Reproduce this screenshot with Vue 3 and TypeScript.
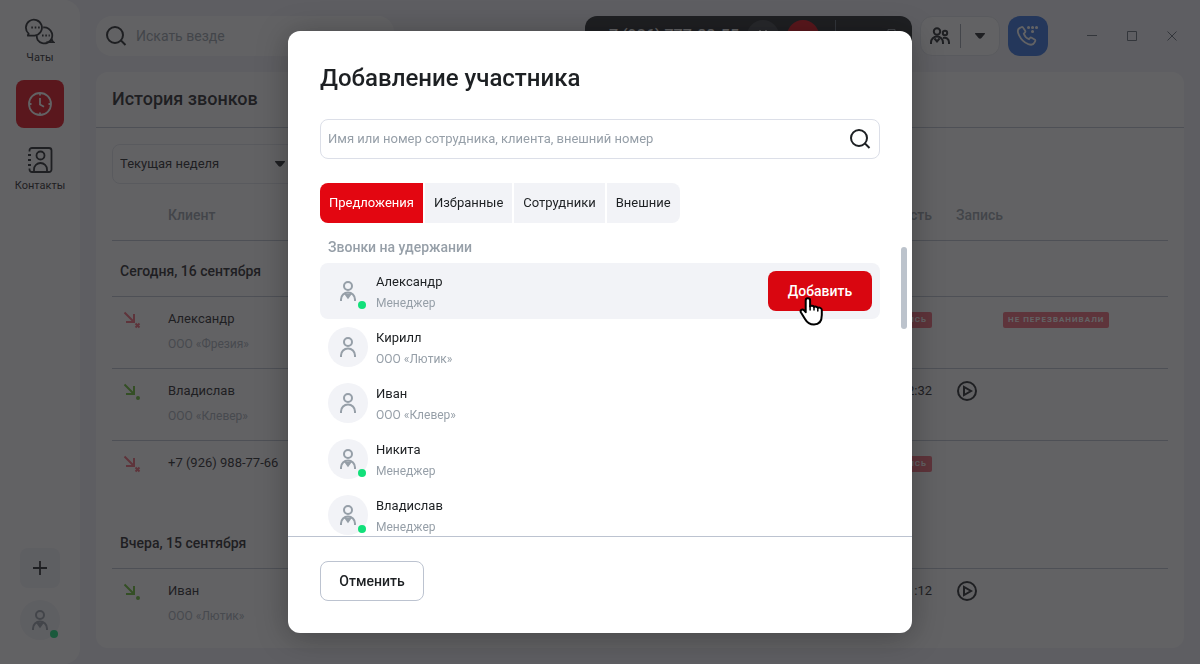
<script setup lang="ts">
import { ref } from 'vue'

interface Person {
  name: string
  note: string
  online: boolean
  active?: boolean
}

interface Call {
  client: string
  company: string
  missed: boolean
  duration: string
  badge: string
  status: string
}

interface CallGroup {
  title: string
  calls: Call[]
}

const tabs = ['Предложения', 'Избранные', 'Сотрудники', 'Внешние']
const activeTab = ref('Предложения')

const people: Person[] = [
  { name: 'Александр', note: 'Менеджер', online: true, active: true },
  { name: 'Кирилл', note: 'ООО «Лютик»', online: false },
  { name: 'Иван', note: 'ООО «Клевер»', online: false },
  { name: 'Никита', note: 'Менеджер', online: true },
  { name: 'Владислав', note: 'Менеджер', online: true },
]

const groups: CallGroup[] = [
  {
    title: 'Сегодня, 16 сентября',
    calls: [
      { client: 'Александр', company: 'ООО «Фрезия»', missed: true, duration: '', badge: 'Не дозвонились', status: 'Не перезванивали' },
      { client: 'Владислав', company: 'ООО «Клевер»', missed: false, duration: '02:32', badge: '', status: '' },
      { client: '+7 (926) 988-77-66', company: '', missed: true, duration: '', badge: 'Не дозвонились', status: '' },
    ],
  },
  {
    title: 'Вчера, 15 сентября',
    calls: [{ client: 'Иван', company: 'ООО «Лютик»', missed: false, duration: '01:12', badge: '', status: '' }],
  },
]
</script>

<template>
  <div class="app">
    <nav class="sidebar">
      <button class="nav-item" type="button">
        <svg width="30" height="28" viewBox="0 0 30 28" class="line">
          <path d="M3.600 15.600A8 8 0 1 1 9.500 17.600H2.200c1.300-.5 1.500-1.200 1.400-2z" />
          <path d="M18.200 9.500a8 8 0 1 1-5.500 12.500 8 8 0 0 1-.9-4.500M26.800 20.500c-.1 1.500.3 2.600 1.600 3.700h-7" />
          <path d="M6.300 9.500h1.600M9.700 9.500h1.600M13.100 9.500h1.600M17 17.500h1.600M20.300 17.500h1.600M23.600 17.500h1.200" />
        </svg>
        <span>Чаты</span>
      </button>
      <button class="nav-item current" type="button" aria-label="История звонков">
        <svg width="24" height="24" viewBox="0 0 24 24" class="line">
          <circle cx="12" cy="12" r="11" />
          <path d="M12 6v6.400l4 2.400M12 1v2.500M12 20.500V23M1 12h2.500M20.500 12H23" />
        </svg>
      </button>
      <button class="nav-item" type="button">
        <svg width="26" height="28" viewBox="0 0 26 28" class="line">
          <path d="M2.500 5.500V4.500a2.500 2.500 0 0 1 2.500-2.500h17a2.500 2.500 0 0 1 2.500 2.500v19a2.500 2.500 0 0 1-2.500 2.500H5a2.500 2.500 0 0 1-2.500-2.500v-1" />
          <path d="M1 9h3M1 14h3M1 19h3" />
          <circle cx="13.500" cy="9.500" r="4" />
          <path d="M7 26v-2.500a6.500 6.500 0 0 1 13 0V26" />
        </svg>
        <span>Контакты</span>
      </button>
      <div class="spacer"></div>
      <button class="add" type="button" aria-label="Добавить">
        <svg width="16" height="16" viewBox="0 0 16 16" class="line"><path d="M8 1v14M1 8h14" /></svg>
      </button>
      <div class="avatar">
        <svg width="24" height="24" viewBox="0 0 24 24" class="line thick">
          <circle cx="12" cy="7" r="4" />
          <path d="M5 22v-1.500a7 7 0 0 1 14 0V22M9 14.500l3 4 3-4M10.500 15l1.500 1.500 1.500-1.500" />
        </svg>
        <i class="dot"></i>
      </div>
    </nav>

    <main class="main">
      <header class="topbar">
        <label class="search">
          <svg width="24" height="24" viewBox="0 0 24 24" class="line thick"><circle cx="11" cy="11" r="8" /><path d="M17 16.500l4.500 4.500" /></svg>
          <input type="text" placeholder="Искать везде" aria-label="Искать везде" />
        </label>
        <div class="callbar">
          <span class="number">7 (926) 777-88-55</span>
          <button class="round" type="button" aria-label="Удержать">
            <svg width="12" height="14" viewBox="0 0 12 14" class="line"><path d="M3 1v12M9 1v12" /></svg>
          </button>
          <button class="round hang" type="button" aria-label="Завершить"></button>
          <span class="rule"></span>
          <svg width="48" height="24" viewBox="0 0 48 24" class="line thin"><path d="M11.500 8v8M36 5.500h7v12h-7z" /></svg>
        </div>
        <div class="group">
          <button type="button" aria-label="Участники">
            <svg width="24" height="24" viewBox="0 0 24 24" class="line thick">
              <circle cx="9" cy="7.500" r="3.200" />
              <circle cx="17" cy="9" r="2.200" />
              <path d="M3 20v-1.500a6 6 0 0 1 12 0V20M6.500 14.500l2.500 3 2.500-3M15 14c3.500-.8 6 1 6 4.500V20" />
            </svg>
          </button>
          <button type="button" aria-label="Ещё">
            <svg width="12" height="8" viewBox="0 0 12 8"><path d="M1.500 1h9q1 0 .3.900L7.500 6q-1.500 1.500-3 0L1.200 1.900Q.5 1 1.500 1z" fill="currentColor" /></svg>
          </button>
        </div>
        <button class="dial" type="button" aria-label="Набрать номер">
          <svg width="24" height="24" viewBox="0 0 24 24" class="line">
            <path d="M5.300 3.200l-1.800.9c-2 1.100-2 4-.5 7.100 2 4.200 5.500 7.600 9.300 9 3 1 5.200.4 6.100-1.500l.8-1.600c.3-.7 0-1.300-.6-1.700l-3-1.700c-.6-.3-1.200-.2-1.600.3l-1 1.200c-2-.8-4.500-3.500-5.200-5.500l1.200-1.300c.4-.4.5-.9.300-1.400L7.300 3.900c-.4-.9-1.200-1.100-2-.7z" />
            <path d="M12.500 3.500h.1M16.500 3.500h.1M20.500 3.500h.1M16.500 7.500h.1" class="dots" />
          </svg>
        </button>
        <div class="window-controls">
          <button type="button" aria-label="Свернуть"><svg width="12" height="12" viewBox="0 0 12 12" class="line thin"><path d="M1 5.500h10" /></svg></button>
          <button type="button" aria-label="Развернуть"><svg width="12" height="12" viewBox="0 0 12 12" class="line thin"><path d="M1.500 1.500h9v9h-9z" /></svg></button>
          <button type="button" aria-label="Закрыть"><svg width="12" height="12" viewBox="0 0 12 12" class="line thin"><path d="M1.500 1.500l9 9M10.500 1.500l-9 9" /></svg></button>
        </div>
      </header>

      <section class="panel">
        <h1>История звонков</h1>
        <div class="content">
          <div class="period">
            <select aria-label="Период"><option>Текущая неделя</option></select>
            <svg width="12" height="8" viewBox="0 0 12 8"><path d="M1.500 1h9q1 0 .3.900L7.500 6q-1.500 1.500-3 0L1.200 1.900Q.5 1 1.500 1z" fill="currentColor" /></svg>
          </div>
          <table>
            <colgroup><col class="c-icon" /><col /><col class="c-duration" /><col class="c-record" /><col class="c-status" /></colgroup>
            <thead>
              <tr><th></th><th>Клиент</th><th class="right">Длительность</th><th>Запись</th><th></th></tr>
            </thead>
            <tbody v-for="group in groups" :key="group.title">
              <tr class="day"><th colspan="5">{{ group.title }}</th></tr>
              <tr v-for="call in group.calls" :key="call.client" class="call">
                <td>
                  <svg width="24" height="24" viewBox="0 0 24 24" class="line thick" :class="call.missed ? 'missed' : 'accepted'">
                    <path d="M4.500 5.500l9.500 9.500M14 7v8H6" />
                    <path v-if="call.missed" d="M15.500 16.500l4 4M19.500 16.500l-4 4" />
                    <circle v-else cx="18" cy="19" r="1" />
                  </svg>
                </td>
                <td><div class="client">{{ call.client }}</div><div class="company">{{ call.company }}</div></td>
                <td class="right"><span v-if="call.badge" class="badge">{{ call.badge }}</span><template v-else>{{ call.duration }}</template></td>
                <td>
                  <button v-if="call.duration" class="play" type="button" aria-label="Слушать">
                    <svg width="22" height="22" viewBox="0 0 22 22" class="line thick"><circle cx="11" cy="11" r="9" /><path d="M8 7v8l7-4z" /></svg>
                  </button>
                </td>
                <td><span v-if="call.status" class="badge">{{ call.status }}</span></td>
              </tr>
            </tbody>
          </table>
        </div>
      </section>
    </main>

    <div class="overlay">
      <div class="modal" role="dialog" aria-modal="true" aria-labelledby="dialog-title">
        <div class="modal-top">
          <h2 id="dialog-title">Добавление участника</h2>
          <label class="field">
            <input type="text" placeholder="Имя или номер сотрудника, клиента, внешний номер" aria-label="Поиск участника" />
            <svg width="24" height="24" viewBox="0 0 24 24" class="line thick"><circle cx="11" cy="11" r="8" /><path d="M17 16.500l4.500 4.500" /></svg>
          </label>
          <div class="tabs" role="tablist">
            <button v-for="tab in tabs" :key="tab" type="button" role="tab" :aria-selected="tab === activeTab" :class="{ selected: tab === activeTab }" @click="activeTab = tab">{{ tab }}</button>
          </div>
        </div>
        <div class="list">
          <h3>Звонки на удержании</h3>
          <ul>
            <li v-for="person in people" :key="person.name" :class="{ active: person.active }">
              <div class="avatar">
                <svg width="24" height="24" viewBox="0 0 24 24" class="line thick">
                  <circle cx="12" cy="7" r="4" />
                  <path d="M5 22v-1.500a7 7 0 0 1 14 0V22" />
                  <path v-if="person.online" d="M9 14.500l3 4 3-4M10.500 15l1.500 1.500 1.500-1.500" />
                </svg>
                <i v-if="person.online" class="dot"></i>
              </div>
              <div class="who"><div class="name">{{ person.name }}</div><div class="note">{{ person.note }}</div></div>
              <button v-if="person.active" class="primary" type="button">
                Добавить
                <svg class="pointer" width="26" height="30" viewBox="0 0 26 30">
                  <path d="M6.700 3.500a2.200 2.200 0 0 1 4.400 0V9.500c.8-1 3.500-.9 3.900.6 1-.9 3.400-.6 3.800.9 1.100-.8 4-.3 4 2V18c0 5.500-2.500 9.500-7.800 9.500-5 0-7-2-9-5.500l-4-6.500c-1.300-2.300 1.300-4 2.900-2.300l1.800 2z" fill="#fff" stroke="#000" stroke-width="2" stroke-linejoin="round" />
                  <path d="M11.100 9v4M15 10v3M18.800 11v3" fill="none" stroke="#000" stroke-width="1.500" stroke-linecap="round" />
                </svg>
              </button>
            </li>
          </ul>
          <div class="thumb"></div>
        </div>
        <footer><button class="secondary" type="button">Отменить</button></footer>
      </div>
    </div>
  </div>
</template>

<style>
body {
  margin: 0;
  overflow: hidden;
}
</style>

<style scoped>
* {
  box-sizing: border-box;
}
.app {
  display: flex;
  height: 100vh;
  background: #f2f2f7;
  color: #1d2023;
  font: 13px/20px Roboto, 'Noto Sans', sans-serif;
}
button,
input,
select {
  margin: 0;
  padding: 0;
  border: 0;
  background: none;
  color: inherit;
  font: inherit;
}
input,
select {
  outline: 0;
  appearance: none;
}
input::placeholder {
  color: #969fa8;
  opacity: 1;
}
button {
  display: flex;
  align-items: center;
  justify-content: center;
}
svg {
  display: block;
  flex: none;
}
.line {
  fill: none;
  stroke: currentColor;
  stroke-width: 1.8;
}
.thick {
  stroke-width: 2;
}
.thin {
  stroke-width: 1;
}
.dots {
  stroke-width: 3;
  stroke-linecap: round;
}
.sidebar {
  display: flex;
  flex-direction: column;
  align-items: center;
  gap: 16px;
  width: 80px;
  flex: none;
  padding: 16px 0 24px;
  background: #fff;
  border-radius: 0 16px 16px 0;
}
.nav-item {
  flex-direction: column;
  width: 64px;
  height: 48px;
  padding-top: 4px;
  gap: 4px;
  font-size: 11px;
  line-height: 16px;
}
.nav-item.current {
  width: 48px;
  padding-top: 0;
  border-radius: 8px;
  background: #e30611;
  color: #fff;
}
.spacer {
  flex: 1;
}
.add {
  width: 40px;
  height: 40px;
  margin-bottom: -4px;
  border-radius: 8px;
  background: #f2f3f7;
}
.avatar {
  display: flex;
  align-items: center;
  justify-content: center;
  position: relative;
  flex: none;
  width: 40px;
  height: 40px;
  border-radius: 50%;
  background: #f2f3f7;
  color: #969fa8;
}
.dot {
  position: absolute;
  right: 2px;
  bottom: 2px;
  width: 8px;
  height: 8px;
  border-radius: 50%;
  background: #12e07a;
}
.main {
  display: flex;
  flex-direction: column;
  flex: 1;
  min-width: 0;
  gap: 16px;
  padding: 16px;
}
.topbar {
  display: flex;
  align-items: center;
  height: 40px;
  gap: 8px;
}
.search {
  display: flex;
  align-items: center;
  width: 298px;
  height: 40px;
  padding: 0 8px;
  gap: 8px;
  border-radius: 16px;
  background: #fff;
}
.search input {
  flex: 1;
  min-width: 0;
  font-size: 14px;
}
.callbar {
  display: flex;
  align-items: center;
  height: 40px;
  width: 327px;
  margin-left: auto;
  padding: 0 12px 0 24px;
  gap: 8px;
  border-radius: 12px;
  background: #1d2023;
  color: #fff;
}
.number {
  flex: 1;
  font-size: 16px;
  font-weight: 500;
  white-space: nowrap;
}
.round {
  width: 32px;
  height: 32px;
  border-radius: 50%;
  background: #3a3e42;
}
.round.hang {
  background: #e30611;
}
.rule {
  width: 1px;
  height: 32px;
  margin: 0 8px;
  background: #626c77;
}
.callbar .thin {
  color: #969fa8;
}
.group {
  display: flex;
  align-items: center;
  width: 80px;
  height: 40px;
  border: 1px solid #e2e5eb;
  border-radius: 12px;
  background: #fff;
}
.group button {
  flex: 1;
  height: 24px;
}
.group button + button {
  border-left: 1px solid #969fa8;
}
.dial {
  width: 40px;
  height: 40px;
  border-radius: 12px;
  background: #2f6fe0;
  color: #fff;
}
.window-controls {
  display: flex;
  gap: 28px;
  padding: 0 6px 0 30px;
  color: #626c77;
}
.panel {
  display: flex;
  flex-direction: column;
  flex: 1;
  min-height: 0;
  overflow: hidden;
  border-radius: 12px;
  background: #fff;
}
h1 {
  flex: none;
  height: 56px;
  margin: 0;
  padding: 0 16px;
  border-bottom: 1px solid #bcc3d0;
  font-size: 18px;
  line-height: 54px;
  font-weight: 500;
}
.content {
  padding: 16px 16px 0;
}
.period {
  display: flex;
  align-items: center;
  width: 184px;
  height: 40px;
  padding: 0 9px 0 7px;
  border: 1px solid #e2e5eb;
  border-radius: 8px;
}
.period select {
  flex: 1;
}
table {
  width: 100%;
  table-layout: fixed;
  border-spacing: 0;
}
.c-icon {
  width: 48px;
}
.c-duration {
  width: 200px;
}
.c-record {
  width: 47px;
}
.c-status {
  width: 173px;
}
th {
  padding: 0 8px;
  border-bottom: 1px solid #bcc3d0;
  text-align: left;
  font-size: 14px;
  font-weight: 500;
  white-space: nowrap;
}
thead th {
  height: 57px;
  padding-top: 6px;
  color: #969fa8;
}
.day th {
  height: 56px;
  padding-top: 4px;
}
.call td {
  height: 72px;
  padding: 10px 8px 0;
  border-bottom: 1px solid #bcc3d0;
  vertical-align: top;
  line-height: 24px;
}
.call:last-child td {
  border-bottom-color: transparent;
}
.right,
.call td.right {
  padding-right: 16px;
  text-align: right;
}
.company {
  color: #a6aeb8;
  font-size: 12px;
  line-height: 26px;
}
.missed {
  color: #f26575;
}
.accepted {
  color: #64bf2c;
}
.badge {
  display: inline-block;
  padding: 0 5px;
  border-radius: 2px;
  background: #f26575;
  color: #fff;
  font-size: 8px;
  line-height: 16px;
  font-weight: 700;
  letter-spacing: 1px;
  text-transform: uppercase;
  white-space: nowrap;
  vertical-align: middle;
}
.play {
  height: 24px;
}
.overlay {
  position: fixed;
  inset: 0;
  display: flex;
  align-items: center;
  justify-content: center;
  padding: 31px 16px;
  background: rgba(31, 32, 34, 0.7);
}
.modal {
  display: flex;
  flex-direction: column;
  width: 100%;
  max-width: 624px;
  height: 100%;
  border-radius: 12px;
  background: #fff;
  box-shadow: 0 4px 32px rgba(0, 0, 0, 0.3);
}
.modal-top {
  padding: 31px 32px 0;
}
h2 {
  margin: 0 0 25px;
  font-size: 24px;
  line-height: 32px;
  font-weight: 500;
}
.field {
  display: flex;
  align-items: center;
  height: 40px;
  margin-bottom: 24px;
  padding: 0 7px;
  border: 1px solid #dcdfe8;
  border-radius: 8px;
}
.field input {
  flex: 1;
  min-width: 0;
}
.tabs {
  display: flex;
  gap: 2px;
}
.tabs button {
  height: 40px;
  padding: 0 9px;
  background: #f2f3f7;
}
.tabs button:first-child {
  border-radius: 8px 0 0 8px;
}
.tabs button:last-child {
  border-radius: 0 8px 8px 0;
}
.tabs .selected {
  background: #e30611;
  color: #fff;
}
.list {
  position: relative;
  flex: 1;
  min-height: 0;
  overflow: hidden;
  padding: 0 32px;
}
h3 {
  margin: 0;
  padding: 14px 8px 6px;
  color: #969fa8;
  font-size: 14px;
  line-height: 20px;
  font-weight: 500;
}
ul {
  margin: 0;
  padding: 0;
  list-style: none;
}
li {
  display: flex;
  align-items: center;
  height: 56px;
  padding: 0 8px;
  gap: 8px;
  border-radius: 8px;
}
li.active {
  background: #f2f3f7;
}
.who {
  flex: 1;
  padding-top: 4px;
}
.note {
  color: #969fa8;
  font-size: 12px;
  line-height: 22px;
}
.primary {
  position: relative;
  width: 104px;
  height: 40px;
  border-radius: 8px;
  background: #d90610;
  color: #fff;
  font-size: 14px;
  font-weight: 500;
}
.pointer {
  position: absolute;
  left: 31px;
  top: 26px;
  z-index: 1;
}
.thumb {
  position: absolute;
  right: 5px;
  top: 24px;
  width: 6px;
  height: 82px;
  border-radius: 3px;
  background: #bcc3cc;
}
footer {
  padding: 24px 32px 32px;
  border-top: 1px solid #bcc3d0;
}
.secondary {
  width: 104px;
  height: 40px;
  border: 1px solid #bcc3d0;
  border-radius: 8px;
  font-size: 14px;
  font-weight: 500;
}
</style>
